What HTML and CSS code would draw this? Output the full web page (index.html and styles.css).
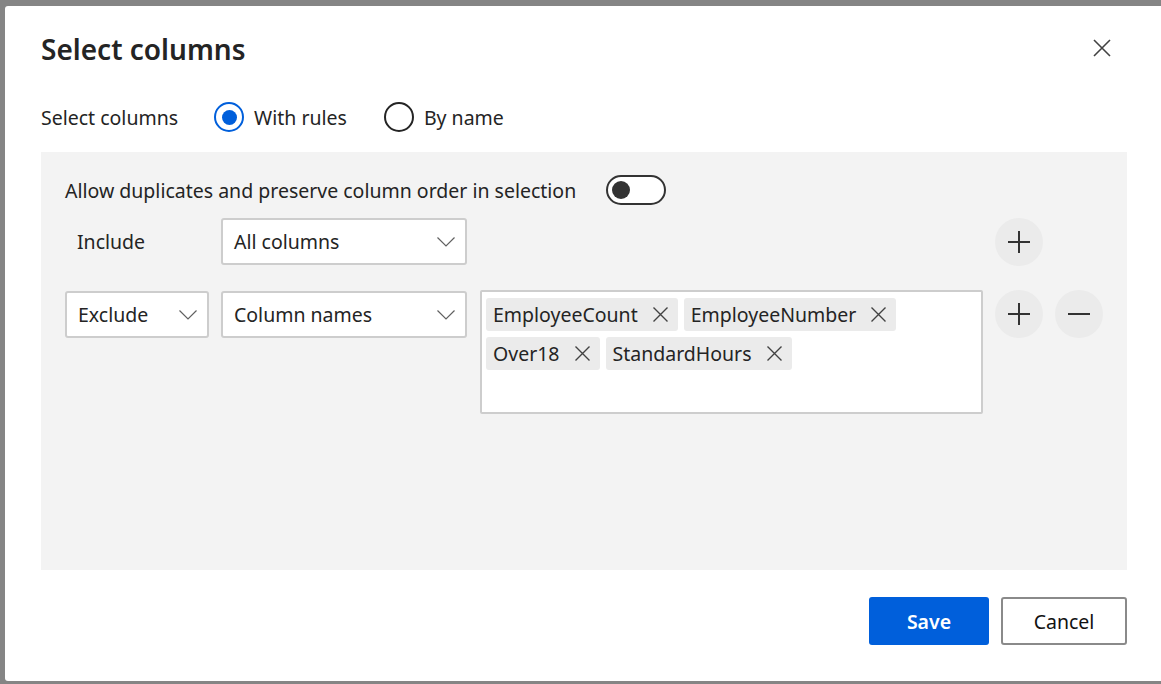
FILE: index.html
```html
<!DOCTYPE html>
<html lang="en">
<head>
<meta charset="utf-8">
<title>Select columns</title>
<link rel="stylesheet" href="styles.css">
</head>
<body>
<div class="dialog">
  <div class="header">
    <h1 class="title">Select columns</h1>
    <button class="close" aria-label="Close">
      <svg width="18" height="18" viewBox="0 0 18 18"><path d="M1 1L17 17M17 1L1 17" stroke="#424242" stroke-width="1.6" fill="none"/></svg>
    </button>
  </div>
  <div class="mode">
    <span class="mode-label">Select columns</span>
    <label class="radio checked"><span class="radio-circle"></span>With rules</label>
    <label class="radio"><span class="radio-circle"></span>By name</label>
  </div>
  <div class="panel">
    <div class="toggle-row">
      <span class="toggle-label">Allow duplicates and preserve column order in selection</span>
      <span class="toggle"><span class="knob"></span></span>
    </div>
    <div class="rules">
      <div class="rule-label">Include</div>
      <div class="dropdown">
        <span>All columns</span>
        <svg class="chev" width="18" height="10" viewBox="0 0 18 10"><path d="M0.5 0.5L9 9L17.5 0.5" stroke="#616161" stroke-width="1.2" fill="none"/></svg>
      </div>
      <div class="empty"></div>
      <button class="round" aria-label="Add rule">
        <svg width="24" height="24" viewBox="0 0 24 24"><path d="M12 1V23M1 12H23" stroke="#333" stroke-width="2" fill="none"/></svg>
      </button>
      <div class="empty"></div>

      <div class="dropdown narrow row2">
        <span>Exclude</span>
        <svg class="chev" width="18" height="10" viewBox="0 0 18 10"><path d="M0.5 0.5L9 9L17.5 0.5" stroke="#616161" stroke-width="1.2" fill="none"/></svg>
      </div>
      <div class="dropdown row2">
        <span>Column names</span>
        <svg class="chev" width="18" height="10" viewBox="0 0 18 10"><path d="M0.5 0.5L9 9L17.5 0.5" stroke="#616161" stroke-width="1.2" fill="none"/></svg>
      </div>
      <div class="tagbox">
        <span class="tag">EmployeeCount<svg width="15" height="15" viewBox="0 0 15 15"><path d="M0.5 0.5L14.5 14.5M14.5 0.5L0.5 14.5" stroke="#424242" stroke-width="1.4" fill="none"/></svg></span>
        <span class="tag">EmployeeNumber<svg width="15" height="15" viewBox="0 0 15 15"><path d="M0.5 0.5L14.5 14.5M14.5 0.5L0.5 14.5" stroke="#424242" stroke-width="1.4" fill="none"/></svg></span>
        <span class="tag">Over18<svg width="15" height="15" viewBox="0 0 15 15"><path d="M0.5 0.5L14.5 14.5M14.5 0.5L0.5 14.5" stroke="#424242" stroke-width="1.4" fill="none"/></svg></span>
        <span class="tag">StandardHours<svg width="15" height="15" viewBox="0 0 15 15"><path d="M0.5 0.5L14.5 14.5M14.5 0.5L0.5 14.5" stroke="#424242" stroke-width="1.4" fill="none"/></svg></span>
      </div>
      <button class="round" aria-label="Add rule">
        <svg width="24" height="24" viewBox="0 0 24 24"><path d="M12 1V23M1 12H23" stroke="#333" stroke-width="2" fill="none"/></svg>
      </button>
      <button class="round" aria-label="Remove rule">
        <svg width="24" height="24" viewBox="0 0 24 24"><path d="M1 12H23" stroke="#333" stroke-width="2" fill="none"/></svg>
      </button>
    </div>
  </div>
  <div class="footer">
    <button class="btn primary">Save</button>
    <button class="btn secondary">Cancel</button>
  </div>
</div>
</body>
</html>
```

FILE: styles.css
```css
* { box-sizing: border-box; }
html, body { margin: 0; height: 684px; overflow: hidden; }
body {
  background: #858585;
  padding: 6px 0 0 5px;
  font-family: "Noto Sans", "Open Sans", sans-serif;
  font-size: 19.5px;
  color: #242424;
}
button { font-family: inherit; color: inherit; }
.dialog {
  width: 1156px;
  height: 675px;
  background: #fff;
  border-radius: 3px 0 0 3px;
  padding: 0 34px 0 36px;
  display: flex;
  flex-direction: column;
}
.header {
  display: flex;
  justify-content: space-between;
  align-items: flex-start;
  padding-top: 23px;
}
.title {
  margin: 0;
  font-size: 28px;
  font-weight: 600;
  line-height: 40px;
}
.close {
  margin-top: 3px;
  margin-right: 9px;
  width: 32px;
  height: 32px;
  border: none;
  background: none;
  padding: 0;
  display: flex;
  align-items: center;
  justify-content: center;
}
.mode {
  margin-top: 33px;
  height: 30px;
  display: flex;
  align-items: center;
}
.mode-label { margin-right: 36px; }
.radio {
  display: flex;
  align-items: center;
  gap: 10px;
  margin-right: 37px;
}
.radio-circle {
  width: 30px;
  height: 30px;
  border-radius: 50%;
  border: 2px solid #242424;
  display: flex;
  align-items: center;
  justify-content: center;
}
.radio.checked .radio-circle { border-color: #005fdb; }
.radio.checked .radio-circle::after {
  content: "";
  width: 15px;
  height: 15px;
  border-radius: 50%;
  background: #005fdb;
}
.panel {
  margin-top: 20px;
  height: 418px;
  background: #f3f3f3;
  padding: 23px 24px 0;
}
.toggle-row {
  display: flex;
  align-items: center;
  height: 30px;
  gap: 30px;
}
.toggle {
  width: 60px;
  height: 30px;
  border: 2px solid #333;
  border-radius: 15px;
  background: #fff;
  display: flex;
  align-items: center;
  padding-left: 4px;
}
.knob {
  width: 18px;
  height: 18px;
  border-radius: 50%;
  background: #333;
}
.rules {
  margin-top: 13px;
  display: grid;
  grid-template-columns: 144px 247px 503px 48px 48px;
  column-gap: 12px;
  row-gap: 24px;
  align-items: start;
}
.rule-label {
  padding-left: 12px;
  line-height: 47px;
}
.dropdown {
  width: 246px;
  height: 47px;
  background: #fff;
  border: 2px solid #cdcdcd;
  border-radius: 3px;
  padding: 0 10px 0 11px;
  display: flex;
  align-items: center;
  justify-content: space-between;
}
.dropdown.narrow { width: 144px; }
.dropdown.row2 { margin-top: 1px; }
.tagbox {
  height: 124px;
  background: #fff;
  border: 2px solid #cdcdcd;
  border-radius: 2px;
  padding: 6px 4px;
  display: flex;
  flex-wrap: wrap;
  align-content: flex-start;
  gap: 6px;
}
.tag {
  height: 33px;
  background: #ebebeb;
  border-radius: 3px;
  padding: 0 10px 0 7px;
  display: inline-flex;
  align-items: center;
  gap: 15px;
}
.round {
  width: 48px;
  height: 48px;
  border-radius: 50%;
  border: none;
  background: #ebebeb;
  padding: 0;
  display: flex;
  align-items: center;
  justify-content: center;
}
.footer {
  margin-top: 27px;
  display: flex;
  justify-content: flex-end;
  gap: 12px;
}
.btn {
  height: 48px;
  border-radius: 3px;
  font-size: 19.5px;
}
.primary {
  width: 120px;
  background: #005fdb;
  color: #fff;
  border: none;
  font-weight: 600;
}
.secondary {
  width: 126px;
  background: #fff;
  border: 2px solid #8a8a8a;
  color: #111;
}
```
